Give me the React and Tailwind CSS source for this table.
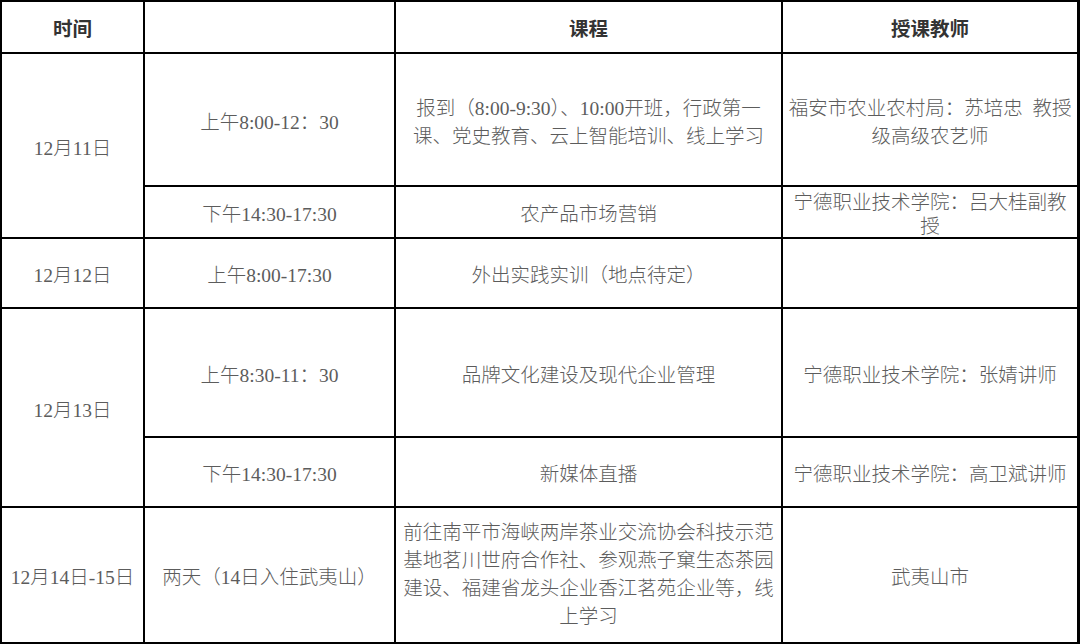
const cell = 'bg-white flex items-center justify-center text-center px-[6px]';

const Cell = ({ className = '', top = 'pt-[6px]', children }) => (
  <div className={`${cell} ${top} ${className}`}>{children}</div>
);

const App = () => {
  return (
    <div
      className="w-[1080px] h-[644px] bg-black p-[2px] grid gap-[2px] grid-cols-[141px_249px_385px_294px] grid-rows-[50px_131px_50px_68px_127px_68px_134px] text-[19.5px] leading-[28px] text-[#5c5c5c] font-light"
      style={{ fontFamily: '"Liberation Serif", "Noto Sans CJK SC", serif' }}
    >
      {/* header */}
      <Cell className="font-bold text-[#333]">时间</Cell>
      <Cell />
      <Cell className="font-bold text-[#333]">课程</Cell>
      <Cell className="font-bold text-[#333]">授课教师</Cell>

      {/* 12月11日 */}
      <Cell className="row-span-2">12月11日</Cell>
      <Cell>上午8:00-12：30</Cell>
      <Cell className="whitespace-nowrap">
        报到（8:00-9:30）、10:00开班，行政第一
        <br />
        课、党史教育、云上智能培训、线上学习
      </Cell>
      <Cell className="whitespace-nowrap">
        福安市农业农村局：苏培忠&nbsp;&nbsp;教授
        <br />
        级高级农艺师
      </Cell>
      <Cell>下午14:30-17:30</Cell>
      <Cell>农产品市场营销</Cell>
      <Cell className="whitespace-nowrap leading-[24px]">
        宁德职业技术学院：吕大桂副教
        <br />
        授
      </Cell>

      {/* 12月12日 */}
      <Cell>12月12日</Cell>
      <Cell>上午8:00-17:30</Cell>
      <Cell>外出实践实训（地点待定）</Cell>
      <Cell />

      {/* 12月13日 */}
      <Cell className="row-span-2">12月13日</Cell>
      <Cell>上午8:30-11：30</Cell>
      <Cell>品牌文化建设及现代企业管理</Cell>
      <Cell>宁德职业技术学院：张婧讲师</Cell>
      <Cell>下午14:30-17:30</Cell>
      <Cell>新媒体直播</Cell>
      <Cell>宁德职业技术学院：高卫斌讲师</Cell>

      {/* 12月14日-15日 */}
      <Cell className="whitespace-nowrap px-0">12月14日-15日</Cell>
      <Cell className="whitespace-nowrap">两天（14日入住武夷山）</Cell>
      <Cell top="pt-0" className="whitespace-nowrap">
        前往南平市海峡两岸茶业交流协会科技示范
        <br />
        基地茗川世府合作社、参观燕子窠生态茶园
        <br />
        建设、福建省龙头企业香江茗苑企业等，线
        <br />
        上学习
      </Cell>
      <Cell>武夷山市</Cell>
    </div>
  );
};

export default App;
